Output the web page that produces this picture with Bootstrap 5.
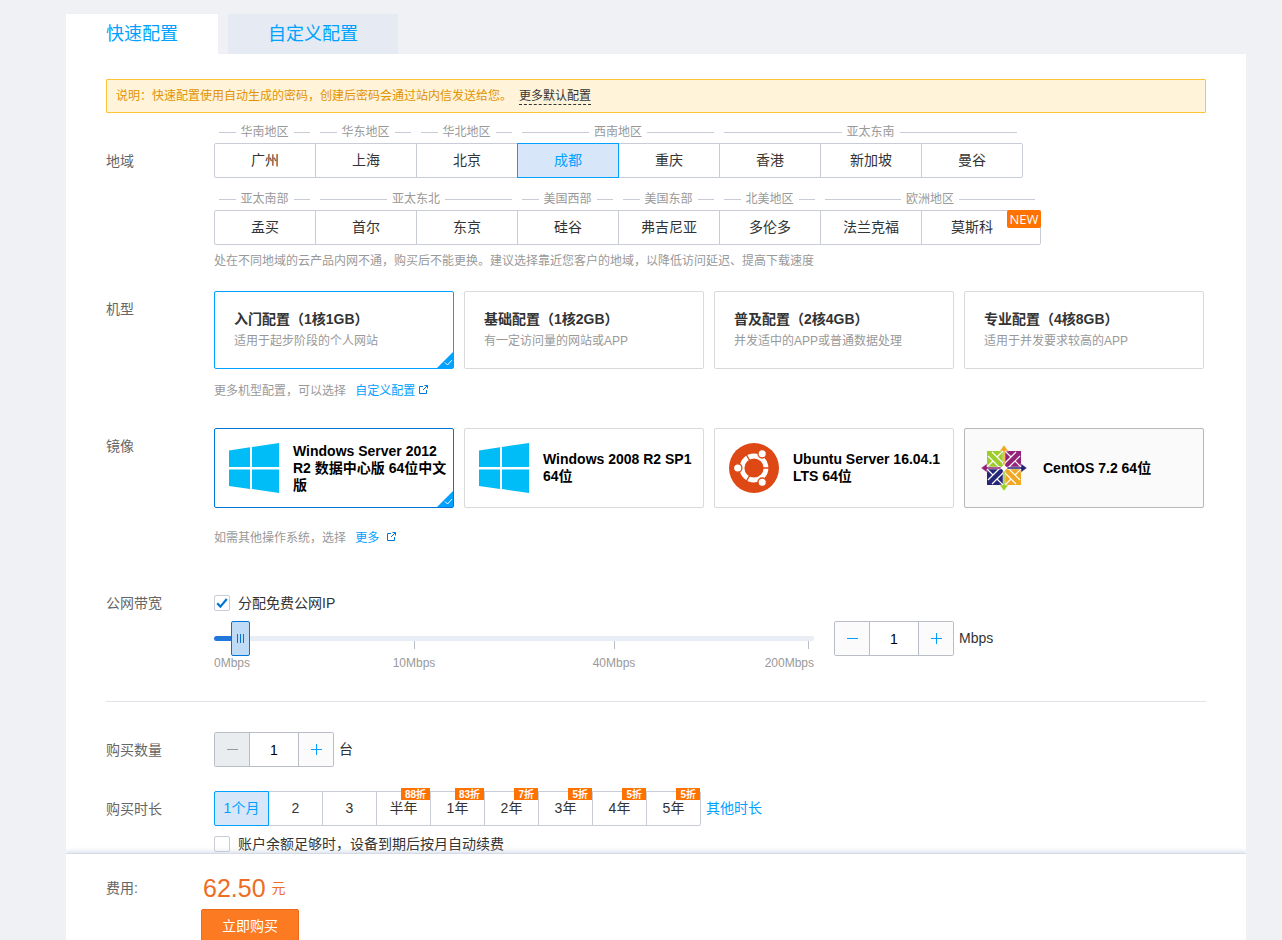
<!DOCTYPE html>
<html lang="zh-CN">
<head>
<meta charset="utf-8">
<meta name="viewport" content="width=device-width, initial-scale=1">
<title>快速配置</title>
<link rel="stylesheet" href="https://cdn.jsdelivr.net/npm/bootstrap@5.3.0/dist/css/bootstrap.min.css">
<style>
  body { background: #eff1f5; color: #333; font: 14px/20px "Liberation Sans", "Noto Sans CJK SC", sans-serif; }
  a { color: #00a1ff; text-decoration: none; }
  .shell { padding: 14px 36px 0 66px; }
  .cfg-tabs { gap: 10px; }
  .cfg-tabs .nav-link { height: 40px; padding: 0 40px; border: 0; border-radius: 0; font-size: 18px; line-height: 40px; color: #00a1ff; background: #e5eaf3; }
  .cfg-tabs .nav-link.active { background: #fff; color: #00a1ff; }
  .panel { padding: 25px 40px 0; }
  .notice { height: 34px; margin-bottom: 8px; padding: 0 9px; border: 1px solid #fdc437; border-radius: 1px; background: #fff3d9; color: #e29300; font-size: 12px; line-height: 32px; }
  .notice a { display: inline-block; margin-left: 7px; color: #333; line-height: 15px; border-bottom: 1px dashed #333; }
  .field-name { flex: 0 0 108px; color: #666; padding-top: 8px; font-size: 14px; line-height: 20px; }
  .region-name { padding-top: 30px; }
  .hint { margin-top: 12px; font-size: 12px; color: #999; line-height: 20px; }
  .hint a { margin-left: 6px; }
  .hint svg { margin-top: -4px; }
  .hint-region { margin-top: 6px; }
  .hint-image { margin-top: 20px; }

  .zone { display: flex; flex-direction: column; }
  .zone-name { display: flex; align-items: center; gap: 5px; height: 22px; margin: 0 5px; color: #999; font-size: 12px; line-height: 22px; white-space: nowrap; }
  .zone-name::before, .zone-name::after { content: ""; flex: 1; height: 1px; background: #c8ccd6; }
  .zone-rows { display: flex; flex-direction: column; gap: 10px; }
  .opt { display: block; position: relative; margin-right: -1px; cursor: pointer; }
  .opt > span { display: block; position: relative; height: 35px; border: 1px solid #c8ccd6; background: #fff; line-height: 33px; text-align: center; }
  .opt > input:checked + span { border-color: #00a1ff; background: #d7e6f9; color: #00a1ff; z-index: 1; }
  .city { width: 102px; }
  .city-new { width: 120px; }
  .city-new > span { padding-right: 18px; }
  .opt-first > span { border-radius: 2px 0 0 2px; }
  .opt-last > span { border-radius: 0 2px 2px 0; }
  .term { width: 55px; }
  .more-terms { margin-left: 6px; line-height: 34px; }
  .flag-new { position: absolute; top: -1px; right: -1px; width: 34px; height: 18px; border-radius: 2px; background: #ff7200; color: #fff; font: 13px/18px "Open Sans", sans-serif; text-align: center; }
  .flag-off { position: absolute; top: -4px; right: 0; height: 12px; padding: 0 4px; background: #ff7200; color: #fff; font-weight: 700; font-size: 10px; line-height: 13px; }

  .choices { display: grid; grid-template-columns: repeat(4, minmax(0, 1fr)); gap: 10px; padding-right: 2px; }
  .choice { position: relative; cursor: pointer; }
  .choice-box { display: flex; position: relative; border: 1px solid #d9d9d9; border-radius: 2px; background: #fff; }
  .choice input:checked + .choice-box { border-color: #00a1ff; }
  .choice .tick { display: none; position: absolute; right: 0; bottom: 0; }
  .choice input:checked + .choice-box .tick { display: block; }
  .model { height: 78px; flex-direction: column; padding: 17px 19px; }
  .model b { font-size: 14px; line-height: 20px; }
  .model small { color: #999; font-size: 12px; line-height: 24px; }
  .image { height: 80px; align-items: center; gap: 14px; padding: 0 0 0 14px; color: #000; font-weight: 700; font-size: 14px; line-height: 17px; }
  .choice input:checked + .image { border-color: #0275d8; }
  .image > svg { flex: none; }
  .image-hover { border-color: #b8b8b8; background: #fafafa; }

  .tickbox { display: flex; align-items: center; gap: 8px; cursor: pointer; }
  .tickbox .form-check-input { width: 16px; height: 16px; margin: 0; border: 1px solid #c8ccd6; border-radius: 2px; background-size: 12px 12px; box-shadow: none; }
  .tickbox .form-check-input:checked { background-color: #fff; background-image: url("data:image/svg+xml,%3Csvg xmlns='http://www.w3.org/2000/svg' viewBox='0 0 12 12'%3E%3Cpath d='M1.2 6.3 4.4 9.6 10.8 2' fill='none' stroke='%230275d8' stroke-width='2.2'/%3E%3C/svg%3E"); }
  .renew { margin-top: 9px; line-height: 18px; }

  .slider { flex: 0 1 600px; margin-right: 20px; }
  .slider input { display: block; -webkit-appearance: none; appearance: none; width: 100%; height: 35px; margin: 0; background: none; }
  .slider input::-webkit-slider-runnable-track { height: 5px; border-radius: 3px; background: linear-gradient(90deg, #2277da var(--fill), #e9edf5 var(--fill)); }
  .slider input::-webkit-slider-thumb { -webkit-appearance: none; width: 19px; height: 35px; margin-top: -15px; border: 1px solid #0275d8; border-radius: 2px;
    background: linear-gradient(#0275d8, #0275d8) 5px 12px / 1px 9px no-repeat, linear-gradient(#0275d8, #0275d8) 8px 12px / 1px 9px no-repeat, linear-gradient(#0275d8, #0275d8) 11px 12px / 1px 9px no-repeat, #bfdbf5; }
  .scale { display: grid; grid-template-columns: repeat(6, 1fr); margin-top: -15px; font-size: 12px; line-height: 14px; color: #999; pointer-events: none; }
  .scale span { display: flex; flex-direction: column; align-items: center; gap: 7px; white-space: nowrap; }
  .scale span::before { content: ""; width: 1px; height: 8px; background: #bbbfc8; }
  .scale .mid { grid-column: span 2; }
  .scale .low { align-items: flex-start; }
  .scale .low::before { background: none; }
  .scale .top { align-items: flex-end; }
  .scale .top::before { margin-right: 5px; }

  .stepper { display: flex; flex: none; width: 120px; height: 35px; border: 1px solid #b9bdc6; border-radius: 2px; overflow: hidden; }
  .stepper button { flex: 0 0 34px; padding: 0; border: 0; background: #fbfbfb; color: #00a1ff; line-height: 0; }
  .stepper button:disabled { background: #e9edf0; color: #999; }
  .stepper input { flex: 1; min-width: 0; padding: 0; border: solid #b9bdc6; border-width: 0 1px; text-align: center; color: #000; background: #fff; }
  .rule { margin: 31px 0 30px; border: 0; border-top: 1px solid #dfe3e9; opacity: 1; }
  .unit { margin-left: 5px; line-height: 34px; }
  .row-model { margin-top: 20px; }
  .row-image { margin-top: 27px; }
  .row-net { margin-top: 45px; }

  .paybar { height: 87px; padding: 0 40px; border-top: 1px solid #d6dce5; background: #fff; box-shadow: 0 -2px 4px rgba(190, 200, 220, .5); clip-path: inset(-6px 0 0 0); overflow: hidden; }
  .pay-name { flex: 0 0 95px; padding-top: 24px; color: #666; }
  .price { display: flex; align-items: center; gap: 6px; padding: 12px 0 0 2px; height: 55px; color: #ed6d25; }
  .price strong { font-weight: 400; font-size: 25px; }
  .buy { height: 36px; padding: 0 20px 2px; border: 1px solid #ed6a1c; border-radius: 2px; background: #fc7a22; color: #fff; font-size: 14px; line-height: 32px; }
</style>
</head>
<body>
<svg class="d-none" aria-hidden="true">
  <symbol id="i-corner" viewBox="0 0 16 16"><path d="M16 0v16H0z" fill="#00a1ff"/><path d="M8 10.500l2.500 2.500 4.500-5" fill="none" stroke="#fff"/></symbol>
  <symbol id="i-out" viewBox="0 0 9 9"><path d="M4 1.500H.5v7h7V5M5.500.5h3v3M8.500.5 4 5" fill="none" stroke="#0275d8"/></symbol>
  <symbol id="i-minus" viewBox="0 0 11 11"><path d="M0 5.500h11" stroke="currentColor"/></symbol>
  <symbol id="i-plus" viewBox="0 0 11 11"><path d="M0 5.500h11M5.500 0v11" stroke="currentColor"/></symbol>
  <symbol id="i-win" viewBox="0 0 50 50"><path d="M0 7.500 21 4.300V24H0zM23 4 50 0v24H23zM0 26.500h21V46L0 43zM23 26.500h27V50l-27-4z" fill="#00bdf8"/></symbol>
  <symbol id="i-ubuntu" viewBox="0 0 50 50">
    <circle cx="25" cy="25" r="25" fill="#dd4814"/>
    <circle cx="25" cy="25" r="12" fill="none" stroke="#fff" stroke-width="4.800"/>
    <path d="M25 25h16M25 25l-8-13.860M25 25l-8 13.860" stroke="#dd4814" stroke-width="1.300"/>
    <g fill="#fff" stroke="#dd4814" stroke-width="1.300"><circle cx="8.700" cy="25" r="4.200"/><circle cx="33.200" cy="10.800" r="4.200"/><circle cx="33.200" cy="39.200" r="4.200"/></g>
  </symbol>
  <symbol id="i-centos" viewBox="0 0 50 50">
    <path d="M8 8h16v16H8z" fill="#9ccd2a"/><path d="M26 8h16v16H26z" fill="#932279"/>
    <path d="M8 26h16v16H8z" fill="#262577"/><path d="M26 26h16v16H26z" fill="#efa724"/>
    <path d="M25 21 13 9M25 21 37 9M25 29 13 41M25 29 37 41M21 25 9 13M21 25 9 37M29 25 41 13M29 25 41 37" fill="none" stroke="#fff" stroke-width="1.200"/>
    <path d="M18 14l7-7 7 7M18 36l7 7 7-7M14 18l-7 7 7 7M36 18l7 7-7 7" fill="none" stroke="#fff" stroke-width="1.200"/>
    <path d="M24 22V8h-3.500L25 2l4.500 6H26v14z" fill="#efa724" stroke="#fafafa" stroke-width=".5"/>
    <path d="M24 28v14h-3.500L25 48l4.500-6H26V28z" fill="#9ccd2a" stroke="#fafafa" stroke-width=".5"/>
    <path d="M22 24H8v-3.500L2 25l6 4.500V26h14z" fill="#932279" stroke="#fafafa" stroke-width=".5"/>
    <path d="M28 24h14v-3.500L48 25l-6 4.500V26H28z" fill="#262577" stroke="#fafafa" stroke-width=".5"/>
    <path d="M25 21.500 28.500 25 25 28.500 21.500 25z" fill="#fff"/>
  </symbol>
</svg>

<div class="shell">
  <nav class="nav cfg-tabs">
    <a class="nav-link active" href="#quick" aria-current="page">快速配置</a>
    <a class="nav-link" href="#custom">自定义配置</a>
  </nav>

  <main class="panel bg-white">
    <div class="notice">说明：快速配置使用自动生成的密码，创建后密码会通过站内信发送给您。<a href="#defaults">更多默认配置</a></div>

    <section class="d-flex">
      <div class="field-name region-name">地域</div>
      <div>
        <div class="zone-rows">
          <div class="d-flex">
            <div class="zone"><div class="zone-name">华南地区</div><div class="d-flex"><label class="opt city opt-first"><input class="btn-check" type="radio" name="region"><span>广州</span></label></div></div>
            <div class="zone"><div class="zone-name">华东地区</div><div class="d-flex"><label class="opt city"><input class="btn-check" type="radio" name="region"><span>上海</span></label></div></div>
            <div class="zone"><div class="zone-name">华北地区</div><div class="d-flex"><label class="opt city"><input class="btn-check" type="radio" name="region"><span>北京</span></label></div></div>
            <div class="zone"><div class="zone-name">西南地区</div><div class="d-flex"><label class="opt city"><input class="btn-check" type="radio" name="region" checked><span>成都</span></label><label class="opt city"><input class="btn-check" type="radio" name="region"><span>重庆</span></label></div></div>
            <div class="zone"><div class="zone-name">亚太东南</div><div class="d-flex"><label class="opt city"><input class="btn-check" type="radio" name="region"><span>香港</span></label><label class="opt city"><input class="btn-check" type="radio" name="region"><span>新加坡</span></label><label class="opt city opt-last"><input class="btn-check" type="radio" name="region"><span>曼谷</span></label></div></div>
          </div>
          <div class="d-flex">
            <div class="zone"><div class="zone-name">亚太南部</div><div class="d-flex"><label class="opt city opt-first"><input class="btn-check" type="radio" name="region"><span>孟买</span></label></div></div>
            <div class="zone"><div class="zone-name">亚太东北</div><div class="d-flex"><label class="opt city"><input class="btn-check" type="radio" name="region"><span>首尔</span></label><label class="opt city"><input class="btn-check" type="radio" name="region"><span>东京</span></label></div></div>
            <div class="zone"><div class="zone-name">美国西部</div><div class="d-flex"><label class="opt city"><input class="btn-check" type="radio" name="region"><span>硅谷</span></label></div></div>
            <div class="zone"><div class="zone-name">美国东部</div><div class="d-flex"><label class="opt city"><input class="btn-check" type="radio" name="region"><span>弗吉尼亚</span></label></div></div>
            <div class="zone"><div class="zone-name">北美地区</div><div class="d-flex"><label class="opt city"><input class="btn-check" type="radio" name="region"><span>多伦多</span></label></div></div>
            <div class="zone"><div class="zone-name">欧洲地区</div><div class="d-flex"><label class="opt city"><input class="btn-check" type="radio" name="region"><span>法兰克福</span></label><label class="opt city-new opt-last"><input class="btn-check" type="radio" name="region"><span>莫斯科<i class="flag-new">NEW</i></span></label></div></div>
          </div>
        </div>
        <div class="hint hint-region">处在不同地域的云产品内网不通，购买后不能更换。建议选择靠近您客户的地域，以降低访问延迟、提高下载速度</div>
      </div>
    </section>

    <section class="d-flex row-model">
      <div class="field-name">机型</div>
      <div class="flex-grow-1">
        <div class="choices">
          <label class="choice"><input class="btn-check" type="radio" name="model" checked><span class="choice-box model"><b>入门配置（1核1GB）</b><small>适用于起步阶段的个人网站</small><svg class="tick" width="16" height="16"><use href="#i-corner"/></svg></span></label>
          <label class="choice"><input class="btn-check" type="radio" name="model"><span class="choice-box model"><b>基础配置（1核2GB）</b><small>有一定访问量的网站或APP</small></span></label>
          <label class="choice"><input class="btn-check" type="radio" name="model"><span class="choice-box model"><b>普及配置（2核4GB）</b><small>并发适中的APP或普通数据处理</small></span></label>
          <label class="choice"><input class="btn-check" type="radio" name="model"><span class="choice-box model"><b>专业配置（4核8GB）</b><small>适用于并发要求较高的APP</small></span></label>
        </div>
        <div class="hint">更多机型配置，可以选择 <a href="#custom">自定义配置 <svg width="9" height="9"><use href="#i-out"/></svg></a></div>
      </div>
    </section>

    <section class="d-flex row-image">
      <div class="field-name">镜像</div>
      <div class="flex-grow-1">
        <div class="choices">
          <label class="choice"><input class="btn-check" type="radio" name="image" checked><span class="choice-box image"><svg width="50" height="50"><use href="#i-win"/></svg><span>Windows Server 2012 R2 数据中心版 64位中文版</span><svg class="tick" width="16" height="16"><use href="#i-corner"/></svg></span></label>
          <label class="choice"><input class="btn-check" type="radio" name="image"><span class="choice-box image"><svg width="50" height="50"><use href="#i-win"/></svg><span>Windows 2008 R2 SP1 64位</span></span></label>
          <label class="choice"><input class="btn-check" type="radio" name="image"><span class="choice-box image"><svg width="50" height="50"><use href="#i-ubuntu"/></svg><span>Ubuntu Server 16.04.1 LTS 64位</span></span></label>
          <label class="choice"><input class="btn-check" type="radio" name="image"><span class="choice-box image image-hover"><svg width="50" height="50"><use href="#i-centos"/></svg><span>CentOS 7.2 64位</span></span></label>
        </div>
        <div class="hint hint-image">如需其他操作系统，选择 <a href="#images">更多 <svg class="ms-1" width="9" height="9"><use href="#i-out"/></svg></a></div>
      </div>
    </section>

    <section class="d-flex row-net">
      <div class="field-name pt-0">公网带宽</div>
      <div class="flex-grow-1">
        <label class="tickbox"><input class="form-check-input" type="checkbox" checked>分配免费公网IP</label>
        <div class="d-flex align-items-start mt-2">
          <div class="slider">
            <input type="range" min="0" max="100" value="3" aria-label="公网带宽" style="--fill:3%">
            <div class="scale"><span class="low">0Mbps</span><span class="mid">10Mbps</span><span class="mid">40Mbps</span><span class="top">200Mbps</span></div>
          </div>
          <div class="stepper">
            <button type="button" aria-label="减少带宽"><svg width="11" height="11"><use href="#i-minus"/></svg></button>
            <input type="text" value="1" aria-label="带宽">
            <button type="button" aria-label="增加带宽"><svg width="11" height="11"><use href="#i-plus"/></svg></button>
          </div>
          <span class="unit">Mbps</span>
        </div>
      </div>
    </section>

    <hr class="rule">

    <section class="d-flex">
      <div class="field-name">购买数量</div>
      <div class="stepper">
        <button type="button" disabled aria-label="减少数量"><svg width="11" height="11"><use href="#i-minus"/></svg></button>
        <input type="text" value="1" aria-label="数量">
        <button type="button" aria-label="增加数量"><svg width="11" height="11"><use href="#i-plus"/></svg></button>
      </div>
      <span class="unit">台</span>
    </section>

    <section class="d-flex mt-4">
      <div class="field-name">购买时长</div>
      <div>
        <div class="d-flex">
          <label class="opt term opt-first"><input class="btn-check" type="radio" name="term" checked><span>1个月</span></label>
          <label class="opt term"><input class="btn-check" type="radio" name="term"><span>2</span></label>
          <label class="opt term"><input class="btn-check" type="radio" name="term"><span>3</span></label>
          <label class="opt term"><input class="btn-check" type="radio" name="term"><span>半年<em class="flag-off fst-normal">88折</em></span></label>
          <label class="opt term"><input class="btn-check" type="radio" name="term"><span>1年<em class="flag-off fst-normal">83折</em></span></label>
          <label class="opt term"><input class="btn-check" type="radio" name="term"><span>2年<em class="flag-off fst-normal">7折</em></span></label>
          <label class="opt term"><input class="btn-check" type="radio" name="term"><span>3年<em class="flag-off fst-normal">5折</em></span></label>
          <label class="opt term"><input class="btn-check" type="radio" name="term"><span>4年<em class="flag-off fst-normal">5折</em></span></label>
          <label class="opt term opt-last"><input class="btn-check" type="radio" name="term"><span>5年<em class="flag-off fst-normal">5折</em></span></label>
          <a class="more-terms" href="#terms">其他时长</a>
        </div>
        <label class="tickbox renew"><input class="form-check-input" type="checkbox">账户余额足够时，设备到期后按月自动续费</label>
      </div>
    </section>
  </main>

  <footer class="paybar sticky-bottom d-flex">
    <div class="pay-name">费用:</div>
    <div>
      <div class="price"><strong>62.50</strong><span>元</span></div>
      <button class="buy" type="button">立即购买</button>
    </div>
  </footer>
</div>
<script src="https://cdn.jsdelivr.net/npm/bootstrap@5.3.0/dist/js/bootstrap.bundle.min.js"></script>
</body>
</html>
